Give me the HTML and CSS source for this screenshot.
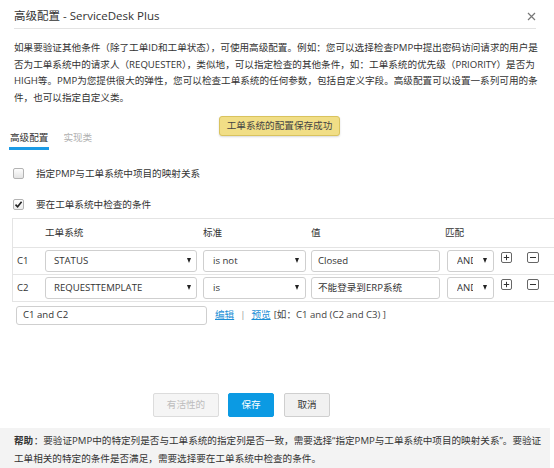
FILE: index.html
```html
<!DOCTYPE html>
<html lang="zh-CN">
<head>
<meta charset="utf-8">
<title>高级配置 - ServiceDesk Plus</title>
<link rel="stylesheet" href="styles.css">
</head>
<body>
<div class="dialog">
  <header class="head">
    <h1>高级配置 - ServiceDesk Plus</h1>
    <svg class="close" width="9" height="9" viewBox="0 0 9 9"><path d="M1 1L8 8M8 1L1 8" stroke="#777" stroke-width="1.2" fill="none"/></svg>
  </header>

  <p class="intro">如果要验证其他条件（除了工单ID和工单状态），可使用高级配置。例如：您可以选择检查PMP中提出密码访问请求的用户是否为工单系统中的请求人（REQUESTER），类似地，可以指定检查的其他条件，如：工单系统的优先级（PRIORITY）是否为HIGH等。PMP为您提供很大的弹性，您可以检查工单系统的任何参数，包括自定义字段。高级配置可以设置一系列可用的条件，也可以指定自定义类。</p>

  <div class="toast">工单系统的配置保存成功</div>

  <nav class="tabs">
    <span class="tab active">高级配置</span>
    <span class="tab">实现类</span>
  </nav>

  <div class="check"><span class="box"></span>指定PMP与工单系统中项目的映射关系</div>
  <div class="check second"><span class="box checked"><svg width="9" height="9" viewBox="0 0 9 9"><path d="M1.5 4.6L3.6 6.8L7.6 1.8" stroke="#222" stroke-width="1.6" fill="none"/></svg></span>要在工单系统中检查的条件</div>

  <div class="cond">
    <div class="row headrow">
      <span></span>
      <span>工单系统</span>
      <span>标准</span>
      <span>值</span>
      <span class="match-h">匹配</span>
      <span></span>
      <span></span>
    </div>
    <div class="row data">
      <span class="cid">C1</span>
      <div class="select s1"><span>STATUS</span><i class="arrow"></i></div>
      <div class="select s2"><span>is not</span><i class="arrow"></i></div>
      <div class="input s3">Closed</div>
      <div class="select s4"><span class="clip">AND</span><i class="arrow"></i></div>
      <svg class="ic plus" width="11" height="11" viewBox="0 0 11 11"><rect x=".5" y=".5" width="10" height="10" rx="1.5" fill="#fff" stroke="#666"/><path d="M2.8 5.5h5.4M5.5 2.8v5.4" stroke="#333"/></svg>
      <svg class="ic minus" width="12" height="11" viewBox="0 0 12 11"><rect x=".5" y=".5" width="11" height="10" rx="1.5" fill="#fff" stroke="#666"/><path d="M3 5.5h6" stroke="#333"/></svg>
    </div>
    <div class="row data">
      <span class="cid">C2</span>
      <div class="select s1"><span>REQUESTTEMPLATE</span><i class="arrow"></i></div>
      <div class="select s2"><span>is</span><i class="arrow"></i></div>
      <div class="input s3">不能登录到ERP系统</div>
      <div class="select s4"><span class="clip">AND</span><i class="arrow"></i></div>
      <svg class="ic plus" width="11" height="11" viewBox="0 0 11 11"><rect x=".5" y=".5" width="10" height="10" rx="1.5" fill="#fff" stroke="#666"/><path d="M2.8 5.5h5.4M5.5 2.8v5.4" stroke="#333"/></svg>
      <svg class="ic minus" width="12" height="11" viewBox="0 0 12 11"><rect x=".5" y=".5" width="11" height="10" rx="1.5" fill="#fff" stroke="#666"/><path d="M3 5.5h6" stroke="#333"/></svg>
    </div>
  </div>

  <div class="expr">
    <div class="input expr-input">C1 and C2</div>
    <a class="link" href="#">编辑</a>
    <span class="sep">|</span>
    <a class="link" href="#">预览</a>
    <span class="hint">[如：C1 and (C2 and C3) ]</span>
  </div>

  <div class="actions">
    <button class="btn disabled" type="button">有活性的</button>
    <button class="btn primary" type="button">保存</button>
    <button class="btn cancel" type="button">取消</button>
  </div>

  <footer class="help"><strong>帮助</strong><span>：要验证PMP中的特定列是否与工单系统的指定列是否一致，需要选择“指定PMP与工单系统中项目的映射关系”。要验证工单相关的特定的条件是否满足，需要选择要在工单系统中检查的条件。</span></footer>
</div>
</body>
</html>
```

FILE: styles.css
```css
html, body {
  margin: 0;
  padding: 0;
}
body {
  width: 554px;
  height: 468px;
  overflow: hidden;
  background: #fff;
  color: #333;
  font-family: "Open Sans", "Noto Sans CJK SC", sans-serif;
  font-size: 9.6px;
  line-height: 16px;
}
.dialog {
  position: relative;
  height: 468px;
  padding-left: 14px;
}
.head {
  display: flex;
  justify-content: space-between;
  align-items: center;
  margin-right: 18px;
  padding: 8px 0 4px;
  border-bottom: 1px solid #e3e3e3;
}
.head h1 {
  margin: 0;
  font-size: 11.5px;
  font-weight: normal;
  line-height: 16px;
  color: #333;
}
.close {
  display: block;
}
.intro {
  margin: 11px 0 0;
  width: 528px;
  line-height: 16.7px;
}
.toast {
  position: absolute;
  left: 219px;
  top: 116px;
  width: 121px;
  height: 20px;
  box-sizing: border-box;
  background: #f1de86;
  border: 1px solid #d9c35e;
  border-radius: 3px;
  box-shadow: 0 1px 2px rgba(0,0,0,0.15);
  color: #444;
  text-align: center;
  line-height: 18px;
}
.tabs {
  display: flex;
  gap: 13px;
  margin: 23px 0 0 -5px;
}
.tab {
  padding: 0 1px 1px;
  line-height: 16px;
  border-bottom: 3px solid transparent;
  color: #b0b0b0;
}
.tab.active {
  color: #333;
  border-bottom-color: #1b9be6;
}
.check {
  display: flex;
  align-items: center;
  margin-top: 16px;
  line-height: 16px;
}
.check.second {
  margin-top: 15px;
}
.box {
  width: 9px;
  height: 9px;
  border: 1px solid #b3b3b3;
  border-radius: 2px;
  background: linear-gradient(#fdfdfd, #e4e4e4);
  margin: 0 12px 0 -1px;
  display: flex;
  align-items: center;
  justify-content: center;
}
.box.checked {
  background: linear-gradient(#fff, #ececec);
}
.box svg {
  display: block;
}
.cond {
  margin: 5px -40px 0 -2px;
  border: 1px solid #e4e4e4;
}
.row {
  display: grid;
  grid-template-columns: 32px 158px 108px 136px 53px 27px 1fr;
  align-items: center;
}
.headrow {
  height: 28px;
  border-bottom: 1px solid #e4e4e4;
}
.match-h {
  margin-left: -2px;
}
.data {
  height: 26px;
}
.data + .data {
  border-top: 1px solid #e4e4e4;
}
.cid {
  padding-left: 4px;
}
.select, .input {
  height: 22px;
  box-sizing: border-box;
  border: 1px solid #cfcfcf;
  border-radius: 3px;
  background: #fff;
  display: flex;
  align-items: center;
  justify-content: space-between;
  white-space: nowrap;
}
.s1 { width: 152px; padding: 0 5px 0 8px; }
.s2 { width: 103px; padding: 0 6px 0 9px; }
.s3 { width: 129px; padding: 0 6px; }
.s4 { width: 47px; padding: 0 6px 0 9px; }
.clip {
  display: block;
  width: 16px;
  overflow: hidden;
}
.arrow {
  width: 0;
  height: 0;
  border-left: 2.5px solid transparent;
  border-right: 2.5px solid transparent;
  border-top: 5px solid #222;
}
.ic {
  display: block;
  align-self: start;
  margin-top: 4px;
}
.ic.plus {
  margin-left: 1px;
}
.expr {
  display: flex;
  align-items: center;
  margin: 4px 0 0 2px;
}
.expr-input {
  width: 191px;
  height: 19px;
  padding: 0 6px;
  margin-right: 8px;
}
.link {
  color: #1c8fd6;
  text-decoration: underline;
}
.sep {
  color: #999;
  margin: 0 6px;
}
.hint {
  margin-left: 3px;
  color: #444;
}
.actions {
  display: flex;
  gap: 9px;
  margin-top: 68px;
  padding-left: 139px;
}
.btn {
  height: 24px;
  box-sizing: border-box;
  padding: 0;
  border-radius: 2px;
  font-family: inherit;
  font-size: 9.6px;
  line-height: 22px;
  text-align: center;
  cursor: pointer;
}
.btn.disabled {
  width: 66px;
  background: #f5f5f5;
  border: 1px solid #dcdcdc;
  color: #bdbdbd;
}
.btn.primary {
  width: 46px;
  background: #0b9ae3;
  border: 1px solid #0b9ae3;
  color: #fff;
}
.btn.cancel {
  width: 46px;
  margin-left: 1px;
  background: #f1f1f1;
  border: 1px solid #cfcfcf;
  color: #333;
}
.help {
  margin: 11px 0 0 -14px;
  width: 550px;
  height: 40px;
  box-sizing: border-box;
  padding: 4px 0 0 14px;
  background: #f3f3f3;
  line-height: 18px;
}
.help strong {
  font-weight: bold;
  margin-right: 0.5px;
}
```
